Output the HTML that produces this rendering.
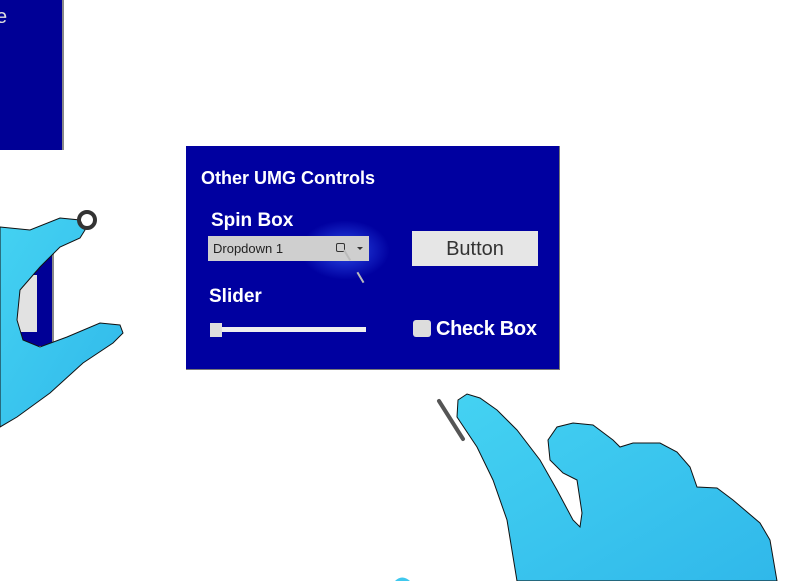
<!DOCTYPE html>
<html><head><meta charset="utf-8"><style>
html,body{margin:0;padding:0;background:#fff;width:800px;height:581px;overflow:hidden;position:relative;font-family:"Liberation Sans",sans-serif}
.a{position:absolute}
.t{color:#fff;font-weight:bold;white-space:nowrap}
</style></head><body>
<div class="a" style="left:0;top:0;width:62px;height:150px;background:#000096;border-right:2px solid #888"></div>
<div class="a t" style="left:-4px;top:6px;font-size:20px;font-weight:normal;color:#ddd">e</div>
<div class="a" style="left:0;top:246px;width:52px;height:100px;background:#000096;border-right:2px solid #888"></div>
<div class="a" style="left:17px;top:275px;width:20px;height:57px;background:#e2e2e2"></div>

<div class="a" style="left:186px;top:146px;width:373px;height:223px;background:#0000a0;border-right:1px solid #777;border-bottom:1px solid #777"></div>
<div class="a" style="left:300px;top:220px;width:90px;height:60px;border-radius:50%;background:radial-gradient(#2a4ae8 0%,rgba(0,0,160,0) 70%)"></div>
<div class="a t" style="left:201px;top:168px;font-size:18px">Other UMG Controls</div>
<div class="a t" style="left:211px;top:210px;font-size:19px">Spin Box</div>
<div class="a" style="left:208px;top:236px;width:161px;height:25px;background:#cfcfcf"></div>
<div class="a" style="left:213px;top:241px;font-size:13px;color:#222">Dropdown 1</div>
<div class="a" style="left:336px;top:243px;width:7px;height:7px;border:1.5px solid #333;border-radius:2px"></div>
<div class="a" style="left:357px;top:247px;width:0;height:0;border-left:3px solid transparent;border-right:3px solid transparent;border-top:3px solid #333"></div>
<div class="a" style="left:412px;top:231px;width:126px;height:35px;background:#e6e6e6"></div>
<div class="a" style="left:412px;top:238px;width:126px;text-align:center;font-size:20px;color:#333">Button</div>
<div class="a t" style="left:209px;top:286px;font-size:19px">Slider</div>
<div class="a" style="left:210px;top:327px;width:156px;height:5px;background:#eee"></div>
<div class="a" style="left:210px;top:323px;width:12px;height:14px;background:#ddd"></div>
<div class="a" style="left:413px;top:320px;width:18px;height:17px;background:#ddd;border-radius:3px"></div>
<div class="a t" style="left:436px;top:318px;font-size:20px;letter-spacing:-0.3px">Check Box</div>

<svg class="a" style="left:0;top:0" width="800" height="581">
<defs>
<linearGradient id="g" x1="0" y1="0" x2="1" y2="1"><stop offset="0" stop-color="#44d2f2"/><stop offset="1" stop-color="#30b8ea"/></linearGradient>
</defs>
<line x1="344" y1="250" x2="368" y2="290" stroke="#bbb" stroke-width="2" stroke-dasharray="12 14"/>
<path d="M0,227 L30,230 L60,218 L80,220 L85,230 L80,238 L60,247 L40,267 L20,290 L17,320 L23,340 L40,347 L67,337 L100,323 L120,325 L123,333 L113,343 L83,363 L50,393 L17,417 L0,427 Z" fill="url(#g)" stroke="#111" stroke-width="1"/>
<circle cx="87" cy="220" r="8" fill="none" stroke="#333" stroke-width="4"/>
<line x1="439" y1="401" x2="463" y2="439" stroke="#555" stroke-width="4" stroke-linecap="round"/>
<path d="M517,581 L507,520 L493,480 L477,447 L457,417 L458,400 L467,394 L480,398 L497,410 L517,430 L540,460 L557,490 L573,520 L580,527 L582,513 L577,480 L563,473 L550,460 L548,440 L557,427 L573,423 L593,425 L613,440 L620,447 L633,443 L660,443 L677,452 L690,467 L697,487 L717,488 L733,500 L760,523 L770,540 L777,581 Z" fill="url(#g)" stroke="#111" stroke-width="1"/>
<path d="M395,581 Q402,574 410,581 Z" fill="#3fc8ee"/>
</svg>
</body></html>
